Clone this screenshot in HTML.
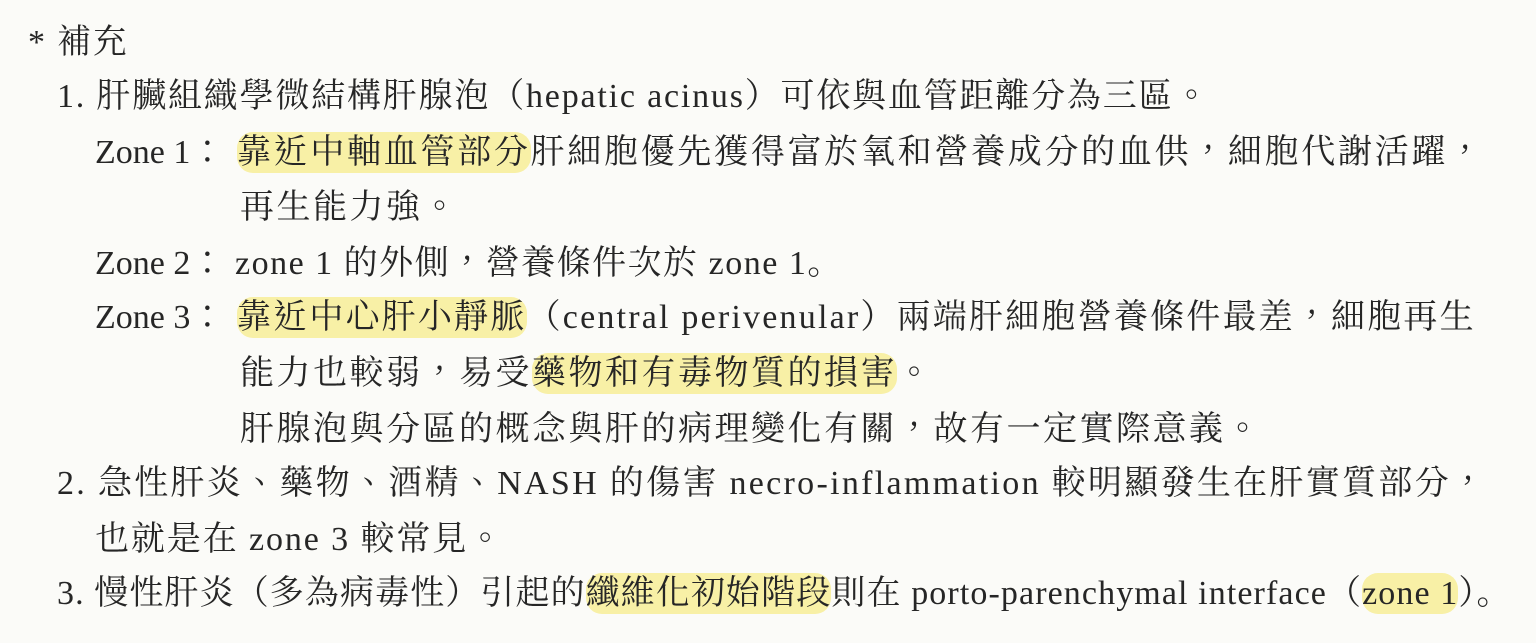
<!DOCTYPE html>
<html lang="zh-TW"><head><meta charset="utf-8"><style>
html,body{margin:0;padding:0}
body{width:1536px;height:643px;background:#fbfbf8;position:relative;overflow:hidden;
font-family:"Liberation Serif","Noto Serif CJK SC","Noto Serif CJK TC",serif;color:#262626;font-size:34px}
.l{position:absolute;white-space:nowrap;line-height:40px;letter-spacing:1.8px}
.h{background:#f8f0a6;border-radius:16px;padding:2px 0}
</style></head><body>
<div class="l" style="left:28px;top:23px">* 補充</div>
<div class="l" style="left:57px;top:77px;letter-spacing:1.8px">1. 肝臟組織學微結構肝腺泡（hepatic acinus）可依與血管距離分為三區。</div>
<div class="l" style="left:95px;top:133px;letter-spacing:0">Zone 1：</div>
<div class="l" style="left:237px;top:133px;letter-spacing:2.7px"><span class="h">靠近中軸血管部分</span>肝細胞優先獲得富於氧和營養成分的血供，細胞代謝活躍，</div>
<div class="l" style="left:240px;top:188px;letter-spacing:2.5px">再生能力強。</div>
<div class="l" style="left:95px;top:244px;letter-spacing:0">Zone 2：</div>
<div class="l" style="left:235px;top:244px;letter-spacing:1.5px">zone 1 的外側，營養條件次於 zone 1。</div>
<div class="l" style="left:95px;top:298px;letter-spacing:0">Zone 3：</div>
<div class="l" style="left:237px;top:298px;letter-spacing:2.2px"><span class="h">靠近中心肝小靜脈</span>（central perivenular）兩端肝細胞營養條件最差，細胞再生</div>
<div class="l" style="left:240px;top:354px;letter-spacing:2.5px">能力也較弱，易受<span class="h">藥物和有毒物質的損害</span>。</div>
<div class="l" style="left:240px;top:410px;letter-spacing:2.5px">肝腺泡與分區的概念與肝的病理變化有關，故有一定實際意義。</div>
<div class="l" style="left:57px;top:464px;letter-spacing:2.3px">2. 急性肝炎、藥物、酒精、NASH 的傷害 necro-inflammation 較明顯發生在肝實質部分，</div>
<div class="l" style="left:95px;top:520px;letter-spacing:1.9px">也就是在 zone 3 較常見。</div>
<div class="l" style="left:57px;top:574px;letter-spacing:1.1px">3. 慢性肝炎（多為病毒性）引起的<span class="h">纖維化初始階段</span>則在 porto-parenchymal interface（<span class="h">zone 1</span>）。</div>
</body></html>
